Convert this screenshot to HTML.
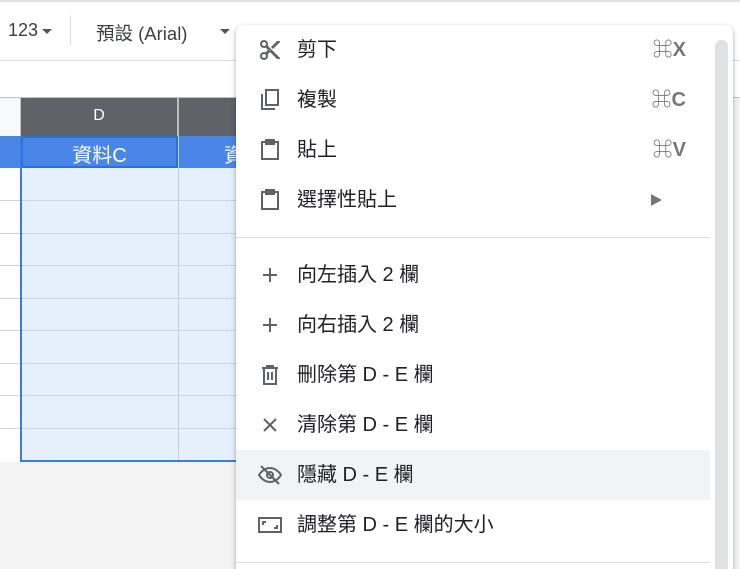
<!DOCTYPE html>
<html><head><meta charset="utf-8"><style>
*{margin:0;padding:0;box-sizing:border-box}
html,body{width:740px;height:569px;overflow:hidden}
body{background:#f3f3f3;font-family:"Liberation Sans","Noto Sans CJK TC",sans-serif;position:relative}
.abs{position:absolute}
.menu{position:absolute;left:236px;top:25px;width:497px;height:560px;background:#fff;border-radius:8px;box-shadow:0 2px 6px rgba(0,0,0,.25),0 1px 2px rgba(0,0,0,.15)}
.item{position:absolute;left:0;width:474px;height:50px;font-size:20px;color:#202124}
.item .ic{position:absolute;left:22px;top:13px;width:24px;height:24px}
.item .t{position:absolute;left:61px;top:11px;line-height:28px}
.sc{position:absolute;right:24px;top:11px;font-size:20px;font-weight:bold;color:#777;line-height:28px}
.hl{background:#f1f3f4}
.div{position:absolute;left:0;width:474px;height:1px;background:#dadce0}
</style></head><body>
<div class="abs" style="left:0;top:0;width:740px;height:61px;background:#fff;border-top:2px solid #e0e0e0;border-bottom:1px solid #dadce0"></div>
<div class="abs" style="left:8px;top:20px;font-size:18px;color:#3c4043">123</div>
<div class="abs" style="left:42px;top:29px;border-left:5px solid transparent;border-right:5px solid transparent;border-top:5px solid #555"></div>
<div class="abs" style="left:70px;top:15px;width:1px;height:30px;background:#dadce0"></div>
<div class="abs" style="left:96px;top:20px;font-size:18.5px;color:#3c4043">預設 (Arial)</div>
<div class="abs" style="left:220px;top:29px;border-left:5px solid transparent;border-right:5px solid transparent;border-top:5px solid #555"></div>
<div class="abs" style="left:0;top:61px;width:740px;height:37px;background:#fff;border-bottom:1px solid #c0c0c0"></div>
<div class="abs" style="left:0;top:98px;width:21px;height:38px;background:#f8f9fa;border-right:1px solid #c0c0c0"></div>
<div class="abs" style="left:21px;top:98px;width:215px;height:38px;background:#5f6368"></div>
<div class="abs" style="left:177px;top:98px;width:2px;height:38px;background:#bbb"></div>
<div class="abs" style="left:21px;top:107px;width:156px;text-align:center;color:#fff;font-size:16px">D</div>
<div class="abs" style="left:0;top:136px;width:236px;height:326px;background:#fff"></div>
<div class="abs" style="left:0;top:136px;width:236px;height:32px;background:#4a86e8"></div>
<div class="abs" style="left:21px;top:136px;width:157px;height:32px;border:2px solid #2a6fdb;background:#4a86e8"></div>
<div class="abs" style="left:21px;top:139px;width:157px;text-align:center;color:#fff;font-size:20px">資料C</div>
<div class="abs" style="left:224px;top:139px;color:#fff;font-size:20px;width:12px;overflow:hidden">資</div>
<div class="abs" style="left:21px;top:168px;width:215px;height:294px;background:#e6effc"></div>
<div class="abs" style="left:178px;top:136px;width:1px;height:326px;background:#c7ced8"></div>
<div class="abs" style="left:0;top:200px;width:236px;height:1px;background:#cfd4da"></div>
<div class="abs" style="left:0;top:233px;width:236px;height:1px;background:#cfd4da"></div>
<div class="abs" style="left:0;top:265px;width:236px;height:1px;background:#cfd4da"></div>
<div class="abs" style="left:0;top:298px;width:236px;height:1px;background:#cfd4da"></div>
<div class="abs" style="left:0;top:330px;width:236px;height:1px;background:#cfd4da"></div>
<div class="abs" style="left:0;top:363px;width:236px;height:1px;background:#cfd4da"></div>
<div class="abs" style="left:0;top:395px;width:236px;height:1px;background:#cfd4da"></div>
<div class="abs" style="left:0;top:428px;width:236px;height:1px;background:#cfd4da"></div>
<div class="abs" style="left:20px;top:136px;width:2px;height:326px;background:#3b7be0"></div>
<div class="abs" style="left:20px;top:460px;width:216px;height:2px;background:#3b7be0"></div>
<div class="menu">
 <div class="abs" style="left:479px;top:15px;width:13px;height:545px;background:#dfe1e4;border-radius:6px"></div>
 <div class="item" style="top:0"><svg class="ic" viewBox="0 0 24 24" fill="#5f6368"><path d="M9.64 7.64c.23-.5.36-1.05.36-1.64 0-2.210-1.79-4-4-4S2 3.79 2 6s1.79 4 4 4c.59 0 1.14-.13 1.64-.36L10 12l-2.36 2.36C7.14 14.130 6.59 14 6 14c-2.21 0-4 1.79-4 4s1.79 4 4 4 4-1.79 4-4c0-.59-.13-1.14-.36-1.64L12 14l7 7h3v-1L9.64 7.64zM6 8c-1.1 0-2-.89-2-2s.9-2 2-2 2 .89 2 2-.9 2-2 2zm0 12c-1.1 0-2-.89-2-2s.9-2 2-2 2 .89 2 2-.9 2-2 2zm6-7.5c-.28 0-.5-.22-.5-.5s.22-.5.5-.5.5.22.5.5-.22.5-.5.5zM19 3l-6 6 2 2 7-7V3z"/></svg><span class="t">剪下</span><span class="sc">⌘X</span></div>
 <div class="item" style="top:50px"><svg class="ic" viewBox="0 0 24 24" fill="none" stroke="#5f6368" stroke-width="2"><path d="M4 6v15h13"/><rect x="8" y="2" width="12" height="15"/></svg><span class="t">複製</span><span class="sc">⌘C</span></div>
 <div class="item" style="top:100px"><svg class="ic" viewBox="0 0 24 24" fill="none" stroke="#5f6368" stroke-width="2"><path d="M8 4H4v17h16V4h-4"/><rect x="8" y="2" width="8" height="4" fill="#5f6368"/></svg><span class="t">貼上</span><span class="sc">⌘V</span></div>
 <div class="item" style="top:150px"><svg class="ic" viewBox="0 0 24 24" fill="none" stroke="#5f6368" stroke-width="2"><path d="M8 4H4v17h16V4h-4"/><rect x="8" y="2" width="8" height="4" fill="#5f6368"/></svg><span class="t">選擇性貼上</span><span class="abs" style="right:48px;top:19px;border-top:6px solid transparent;border-bottom:6px solid transparent;border-left:11px solid #777"></span></div>
 <div class="div" style="top:212px"></div>
 <div class="item" style="top:225px"><svg class="ic" viewBox="0 0 24 24" stroke="#5f6368" stroke-width="2"><path d="M12 5v14M5 12h14"/></svg><span class="t">向左插入 2 欄</span></div>
 <div class="item" style="top:275px"><svg class="ic" viewBox="0 0 24 24" stroke="#5f6368" stroke-width="2"><path d="M12 5v14M5 12h14"/></svg><span class="t">向右插入 2 欄</span></div>
 <div class="item" style="top:325px"><svg class="ic" viewBox="0 0 24 24" fill="none" stroke="#5f6368" stroke-width="2"><path d="M4 5h16M9 5V3h6v2M6 5v16h12V5M10 9v8M14 9v8"/></svg><span class="t">刪除第 D - E 欄</span></div>
 <div class="item" style="top:375px"><svg class="ic" viewBox="0 0 24 24" stroke="#5f6368" stroke-width="2"><path d="M6 6l12 12M18 6L6 18"/></svg><span class="t">清除第 D - E 欄</span></div>
 <div class="item hl" style="top:425px"><svg class="ic" viewBox="0 0 24 24" fill="none" stroke="#5f6368" stroke-width="2"><path d="M1 12s4-7 11-7 11 7 11 7-4 7-11 7S1 12 1 12z"/><circle cx="12" cy="12" r="3"/><path d="M3 3l18 18"/></svg><span class="t">隱藏 D - E 欄</span></div>
 <div class="item" style="top:475px"><svg class="ic" viewBox="0 0 24 24" fill="none" stroke="#5f6368" stroke-width="2"><rect x="1" y="5" width="22" height="14"/><path d="M5 12V9h3M19 12v3h-3"/></svg><span class="t">調整第 D - E 欄的大小</span></div>
 <div class="div" style="top:537px"></div>
</div>
</body></html>
